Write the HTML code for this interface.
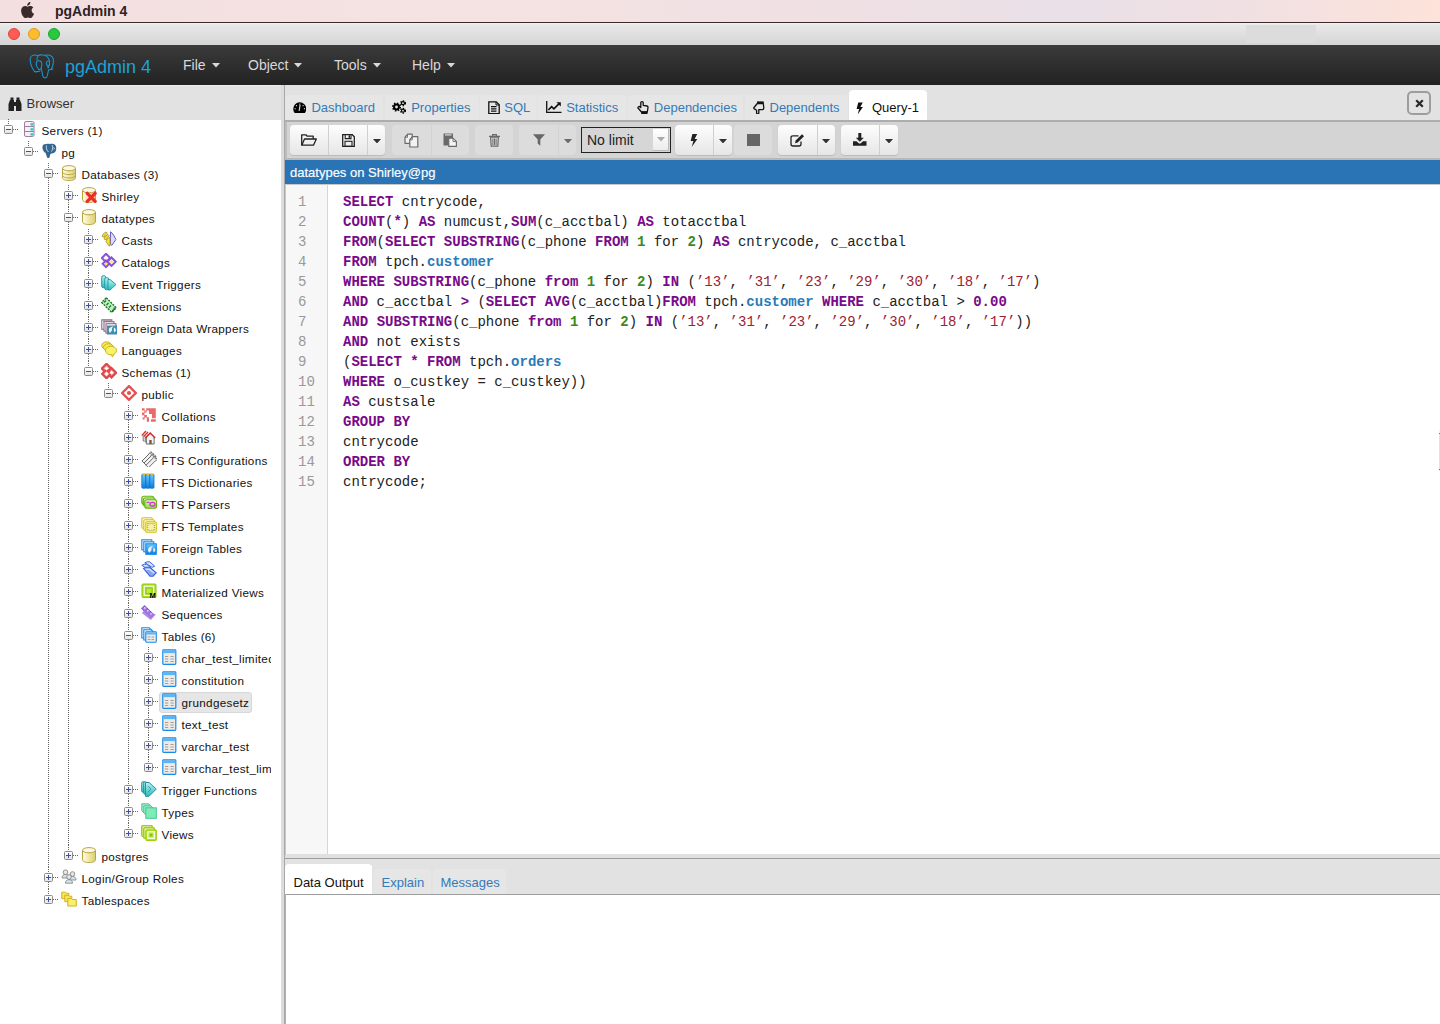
<!DOCTYPE html>
<html><head><meta charset="utf-8"><style>
*{margin:0;padding:0;box-sizing:border-box}
html,body{width:1440px;height:1024px;overflow:hidden;background:#fff;font-family:"Liberation Sans",sans-serif;position:relative}
.abs{position:absolute}
#menubar{position:absolute;left:0;top:0;width:1440px;height:23px;background:linear-gradient(90deg,#f3dfe0 0%,#f5e2e2 35%,#efe0e4 60%,#e9e0e8 74%,#f2e0e2 88%,#fde3d9 100%);border-bottom:1px solid #3a2a2c}
#menubar .apple{position:absolute;left:20px;top:2px}
#menubar .app{position:absolute;left:55px;top:2px;font-weight:bold;font-size:14px;color:#2e2222;line-height:18px}
#titlebar{position:absolute;left:0;top:23px;width:1440px;height:22px;background:linear-gradient(#f4f4f4 0,#e8e8e8 2px,#d5d5d5 100%)}
.tl{position:absolute;top:5px;width:12px;height:12px;border-radius:50%}
#navbar{position:absolute;left:0;top:45px;width:1440px;height:40px;background:linear-gradient(#3b3b3b,#222)}
#navbar .brand{position:absolute;left:65px;top:11px;font-size:18px;color:#1da1d8;line-height:22px}
#navbar .mi{position:absolute;top:11px;font-size:14px;color:#d9d9d9;line-height:18px;display:flex;align-items:center}
#navbar .mi svg{margin-left:6px;margin-top:1px}
#left{position:absolute;left:0;top:85px;width:281px;height:939px;background:#fff;overflow:hidden}
#left .hdr{position:absolute;left:0;top:0;width:281px;height:35px;background:#e2e2e2;border-top:1px solid #ececec}
#left .hdr .t{position:absolute;left:26.5px;top:10px;font-size:13px;color:#333;line-height:16px}
#left .hdr .bi{position:absolute;left:8px;top:11px}
#tree{position:absolute;left:0;top:0;width:271px;height:1024px;overflow:hidden}
.vl{position:absolute;width:1px;background-image:linear-gradient(#666 50%,transparent 50%);background-size:1px 2px}
.hl{position:absolute;width:6px;height:1px;background-image:linear-gradient(90deg,#666 50%,transparent 50%);background-size:2px 1px}
.bx{position:absolute;width:9px;height:9px;border:1px solid #8a8a8a;border-radius:1.5px;background:linear-gradient(#fff,#e4e4e4)}
.bx .mh{position:absolute;left:1px;top:3px;width:5px;height:1px;background:#3b4fa8}
.bx .mv{position:absolute;left:3px;top:1px;width:1px;height:5px;background:#3b4fa8}
.ic{position:absolute;width:16px;height:16px}
.ic svg{display:block}
.tt{position:absolute;font-size:11.7px;letter-spacing:0.3px;line-height:18px;color:#111;white-space:nowrap;padding:0 0}
.selbg{position:absolute;background:#e6e6e6;border:1px solid #d8d8d8;border-radius:3px}
#splitter{position:absolute;left:281px;top:85px;width:4px;height:939px;background:#dcdcdc;border-right:1px solid #a8a8a8}
#right{position:absolute;left:285px;top:85px;width:1155px;height:939px;background:#fff}
#tabstrip{position:absolute;left:0;top:0;width:1155px;height:37px;background:#e2e2e2;border-bottom:2px solid #adadad}
.tab{position:absolute;top:10px;height:25px;background:#e6e6e6;border-radius:4px 4px 0 0}
.tab.act{top:5px;height:30px;background:#fff}
.ti{position:absolute;display:block}.ti svg{display:block}
.tx{position:absolute;top:10px;font-size:13px;line-height:26px;color:#337ab7;white-space:nowrap}.tx.act{color:#111}
#closebtn{position:absolute;left:1122px;top:6px;width:24px;height:24px;border:2px solid #9d9d9d;border-radius:5px;background:#e2e2e2;display:flex;align-items:center;justify-content:center}
#toolbar{position:absolute;left:0;top:37px;width:1155px;height:38px;background:#d4d4d4;border-bottom:2px solid #b8b8b8;border-left:2px solid #bcbcbc}
.bg{position:absolute;top:3px;height:30px;display:flex;border-radius:4px;overflow:hidden}
.bg.en{box-shadow:0 1px 1px rgba(0,0,0,0.12)}
.bt{height:30px;display:flex;align-items:center;justify-content:center;border-left:1px solid #cfcfcf}
.bt:first-child{border-left:none}
.en .bt{background:linear-gradient(#fdfdfd,#e6e6e6)}
.dis .bt{background:#dcdcdc;border-left-color:#d2d2d2}
#sel{position:absolute;left:294px;top:5px;width:90px;height:26px;border:1px solid #222;background:#d6d6d6;font-size:14px;color:#222;line-height:24px;padding-left:5px}
#sel .arr{position:absolute;right:1px;top:1px;width:16px;height:22px;background:linear-gradient(#fff,#ececec);border-right:1px solid #bbb;border-bottom:1px solid #bbb;display:flex;align-items:center;justify-content:center}
#bluebar{position:absolute;left:0;top:75px;width:1155px;height:25px;background:#2a74b6;border-bottom:1px solid #c8c8c8}
#bluebar .t{position:absolute;left:5px;top:5px;font-size:13px;color:#fff;line-height:16px;-webkit-text-stroke:0.15px #fff}
#editor{position:absolute;left:0;top:100px;width:1155px;height:669px;background:#fff}
#gutter{position:absolute;left:0;top:0;width:43px;height:669px;background:#f7f7f7;border-right:1px solid #d6d6d6}
.ln{position:absolute;left:298px;font-family:"Liberation Mono",monospace;font-size:14px;color:#999;line-height:20px}
.cl{position:absolute;left:343px;font-family:"Liberation Mono",monospace;font-size:14px;color:#222;line-height:20px;white-space:pre}
.k{color:#780a8a;font-weight:bold}
.n{color:#3d8a1c;font-weight:bold}
.s{color:#9c2234}
.b{color:#2a7ab8;font-weight:bold}
#hsplit{position:absolute;left:0;top:769px;width:1155px;height:4.5px;background:#e0e0e0;border-bottom:1px solid #9d9d9d}
#otabs{position:absolute;left:0;top:773.5px;width:1155px;height:36px;background:#e2e2e2;border-bottom:1px solid #9d9d9d}
.otab{position:absolute;top:10.5px;height:25px;border-radius:4px 4px 0 0;font-size:13px;color:#337ab7;line-height:27px;background:#e6e6e6}
.otab.act{top:5.5px;height:30px;background:#fff;color:#111;line-height:37px}
</style></head><body>
<div id="menubar"><div class="apple"><svg width="14" height="16" viewBox="0 0 14 16"><path d="M11.6 8.5c0-2 1.6-2.9 1.7-3-0.9-1.3-2.3-1.5-2.8-1.5-1.2-0.1-2.3 0.7-2.9 0.7-0.6 0-1.5-0.7-2.5-0.7C3.8 4 2.5 4.8 1.8 6c-1.4 2.5-0.4 6.1 1 8.1 0.7 1 1.4 2 2.5 2 1 0 1.4-0.6 2.6-0.6 1.2 0 1.5 0.6 2.6 0.6 1.1 0 1.8-1 2.4-2 0.8-1.1 1.1-2.2 1.1-2.3 0 0-2.4-0.9-2.4-3.3zM9.6 2.6c0.5-0.7 0.9-1.6 0.8-2.6-0.8 0-1.8 0.5-2.4 1.2-0.5 0.6-1 1.5-0.8 2.5 0.9 0.1 1.8-0.4 2.4-1.1z" fill="#3b2a2a"/></svg></div><div class="app">pgAdmin 4</div></div>
<div id="titlebar">
 <div class="tl" style="left:8px;background:#fd5c55;border:1px solid #e2443d"></div>
 <div class="tl" style="left:28px;background:#fdbb2d;border:1px solid #dd9c1c"></div>
 <div class="tl" style="left:48px;background:#28c83f;border:1px solid #1aa82a"></div>
 <div class="abs" style="left:1246px;top:2px;width:70px;height:18px;background:#dcdcdc"></div>
</div>
<div id="navbar">
 <div class="abs" style="left:24px;top:3px"><svg width="40" height="34" viewBox="0 0 40 34"><g fill="none" stroke="#1898d2" stroke-width="1.05" stroke-linecap="round" stroke-linejoin="round"><path d="M13.9 7.5C11 6.5 7 6.8 6.3 10 5.8 13 6.8 19 10.5 23.5 12 24.5 14 23.5 16 23"/><path d="M13 12C12.5 8 15 6.5 18 7 21 6.5 24.5 8.5 25.5 13 26 16 25 18.5 24 20"/><path d="M21.5 7.3C24 6.5 28 7 29.3 11 29.5 15 28.5 19 27.5 20.5"/><path d="M14.5 21C12.5 19 12 16 12.5 14 13 12.5 15.5 12.5 17 13.5 18 15 18 18 17 20.5 16.5 21.5 15 22 14.5 21"/><path d="M24.5 19.5C22.5 17 22 14.5 23 13.5 24 12.5 25.5 13 25.5 14"/><path d="M17.5 21C18 24 18.5 27 19 28.5 19.5 30 21 30.2 22.5 29.5 23.5 28 24 25 24.5 22 25.5 21.5 27 21.5 29 21"/></g></svg></div>
 <div class="brand">pgAdmin 4</div>
 <div class="mi" style="left:183px">File<svg width="8" height="4.5" viewBox="0 0 8 4.5"><path d="M0 0h8L4 4.5z" fill="currentColor"/></svg></div>
 <div class="mi" style="left:248px">Object<svg width="8" height="4.5" viewBox="0 0 8 4.5"><path d="M0 0h8L4 4.5z" fill="currentColor"/></svg></div>
 <div class="mi" style="left:334px">Tools<svg width="8" height="4.5" viewBox="0 0 8 4.5"><path d="M0 0h8L4 4.5z" fill="currentColor"/></svg></div>
 <div class="mi" style="left:412px">Help<svg width="8" height="4.5" viewBox="0 0 8 4.5"><path d="M0 0h8L4 4.5z" fill="currentColor"/></svg></div>
</div>
<div id="left">
 <div class="hdr"><div class="bi"><svg width="14" height="14" viewBox="0 0 14 14"><rect x="2.5" y="0.5" width="3" height="3" fill="#222"/><rect x="8.5" y="0.5" width="3" height="3" fill="#222"/><path d="M2 3h4v11H0.5V7z" fill="#222"/><path d="M8 3h4l1.5 4v7H8z" fill="#222"/><rect x="5" y="5" width="4" height="4" fill="#222"/></svg></div><div class="t">Browser</div></div>
</div>
<div id="tree" style="top:0">
<div class="vl" style="left:8.0px;top:119.0px;height:6.0px"></div>
<div class="vl" style="left:28.0px;top:141.0px;height:6.0px"></div>
<div class="vl" style="left:48.0px;top:163.0px;height:6.0px"></div>
<div class="vl" style="left:48.0px;top:178.0px;height:689.0px"></div>
<div class="vl" style="left:68.0px;top:185.0px;height:6.0px"></div>
<div class="vl" style="left:68.0px;top:200.0px;height:7.0px"></div>
<div class="vl" style="left:68.0px;top:207.0px;height:6.0px"></div>
<div class="vl" style="left:68.0px;top:222.0px;height:623.0px"></div>
<div class="vl" style="left:88.0px;top:229.0px;height:6.0px"></div>
<div class="vl" style="left:88.0px;top:244.0px;height:7.0px"></div>
<div class="vl" style="left:88.0px;top:251.0px;height:6.0px"></div>
<div class="vl" style="left:88.0px;top:266.0px;height:7.0px"></div>
<div class="vl" style="left:88.0px;top:273.0px;height:6.0px"></div>
<div class="vl" style="left:88.0px;top:288.0px;height:7.0px"></div>
<div class="vl" style="left:88.0px;top:295.0px;height:6.0px"></div>
<div class="vl" style="left:88.0px;top:310.0px;height:7.0px"></div>
<div class="vl" style="left:88.0px;top:317.0px;height:6.0px"></div>
<div class="vl" style="left:88.0px;top:332.0px;height:7.0px"></div>
<div class="vl" style="left:88.0px;top:339.0px;height:6.0px"></div>
<div class="vl" style="left:88.0px;top:354.0px;height:7.0px"></div>
<div class="vl" style="left:88.0px;top:361.0px;height:6.0px"></div>
<div class="vl" style="left:108.0px;top:383.0px;height:6.0px"></div>
<div class="vl" style="left:128.0px;top:405.0px;height:6.0px"></div>
<div class="vl" style="left:128.0px;top:420.0px;height:7.0px"></div>
<div class="vl" style="left:128.0px;top:427.0px;height:6.0px"></div>
<div class="vl" style="left:128.0px;top:442.0px;height:7.0px"></div>
<div class="vl" style="left:128.0px;top:449.0px;height:6.0px"></div>
<div class="vl" style="left:128.0px;top:464.0px;height:7.0px"></div>
<div class="vl" style="left:128.0px;top:471.0px;height:6.0px"></div>
<div class="vl" style="left:128.0px;top:486.0px;height:7.0px"></div>
<div class="vl" style="left:128.0px;top:493.0px;height:6.0px"></div>
<div class="vl" style="left:128.0px;top:508.0px;height:7.0px"></div>
<div class="vl" style="left:128.0px;top:515.0px;height:6.0px"></div>
<div class="vl" style="left:128.0px;top:530.0px;height:7.0px"></div>
<div class="vl" style="left:128.0px;top:537.0px;height:6.0px"></div>
<div class="vl" style="left:128.0px;top:552.0px;height:7.0px"></div>
<div class="vl" style="left:128.0px;top:559.0px;height:6.0px"></div>
<div class="vl" style="left:128.0px;top:574.0px;height:7.0px"></div>
<div class="vl" style="left:128.0px;top:581.0px;height:6.0px"></div>
<div class="vl" style="left:128.0px;top:596.0px;height:7.0px"></div>
<div class="vl" style="left:128.0px;top:603.0px;height:6.0px"></div>
<div class="vl" style="left:128.0px;top:618.0px;height:7.0px"></div>
<div class="vl" style="left:128.0px;top:625.0px;height:6.0px"></div>
<div class="vl" style="left:128.0px;top:640.0px;height:139.0px"></div>
<div class="vl" style="left:148.0px;top:647.0px;height:6.0px"></div>
<div class="vl" style="left:148.0px;top:662.0px;height:7.0px"></div>
<div class="vl" style="left:148.0px;top:669.0px;height:6.0px"></div>
<div class="vl" style="left:148.0px;top:684.0px;height:7.0px"></div>
<div class="vl" style="left:148.0px;top:691.0px;height:6.0px"></div>
<div class="vl" style="left:148.0px;top:706.0px;height:7.0px"></div>
<div class="vl" style="left:148.0px;top:713.0px;height:6.0px"></div>
<div class="vl" style="left:148.0px;top:728.0px;height:7.0px"></div>
<div class="vl" style="left:148.0px;top:735.0px;height:6.0px"></div>
<div class="vl" style="left:148.0px;top:750.0px;height:7.0px"></div>
<div class="vl" style="left:148.0px;top:757.0px;height:6.0px"></div>
<div class="vl" style="left:128.0px;top:779.0px;height:6.0px"></div>
<div class="vl" style="left:128.0px;top:794.0px;height:7.0px"></div>
<div class="vl" style="left:128.0px;top:801.0px;height:6.0px"></div>
<div class="vl" style="left:128.0px;top:816.0px;height:7.0px"></div>
<div class="vl" style="left:128.0px;top:823.0px;height:6.0px"></div>
<div class="vl" style="left:68.0px;top:845.0px;height:6.0px"></div>
<div class="vl" style="left:48.0px;top:867.0px;height:6.0px"></div>
<div class="vl" style="left:48.0px;top:882.0px;height:7.0px"></div>
<div class="vl" style="left:48.0px;top:889.0px;height:6.0px"></div>
<div class="hl" style="left:13.0px;top:129.0px"></div>
<div class="bx" style="left:4.0px;top:125.0px"><i class="mh"></i></div>
<div class="ic" style="left:20.5px;top:121.0px"><svg width="16" height="16" viewBox="0 0 16 16"><rect x="3.5" y="0.5" width="9.5" height="15" rx="1.5" fill="#f6eef4" stroke="#a07f9c"/><path d="M3.5 5.5h9.5M3.5 10.5h9.5" stroke="#a07f9c"/><rect x="9.5" y="2.2" width="2.6" height="2.3" fill="#28c8c4"/><rect x="9.5" y="7.2" width="2.6" height="2.3" fill="#28c8c4"/><rect x="9.5" y="12.2" width="2.6" height="2.3" fill="#28c8c4"/></svg></div>
<div class="tt" style="left:41.5px;top:121.5px">Servers (1)</div>
<div class="hl" style="left:33.0px;top:151.0px"></div>
<div class="bx" style="left:24.0px;top:147.0px"><i class="mh"></i></div>
<div class="ic" style="left:40.5px;top:143.0px"><svg width="16" height="16" viewBox="0 0 16 16"><path d="M3.5 1.2C1.5 1.5 1 4 1.8 6.5 2.5 8.5 3.5 9.5 4.5 9.8 5 11 5.5 13 6.3 14.8 7.5 15.5 8.5 15 8.8 13.5 9 12 9.2 11 10 10.5 11.5 10.5 13.5 10 14.5 8.5 15.8 6.5 15.5 3 14 1.8 12.5 0.5 10 0.5 8.5 1 7 0.3 5 0.8 3.5 1.2Z" fill="#336791"/><path d="M5.5 2.5C5 5 5.5 7 7.5 9M11 2c1 2 1 4-0.5 6.5M12.5 4.5c1 0.5 1 1.5 0.3 2" stroke="#e8f0f8" stroke-width="0.8" fill="none"/></svg></div>
<div class="tt" style="left:61.5px;top:143.5px">pg</div>
<div class="hl" style="left:53.0px;top:173.0px"></div>
<div class="bx" style="left:44.0px;top:169.0px"><i class="mh"></i></div>
<div class="ic" style="left:60.5px;top:165.0px"><svg width="16" height="16" viewBox="0 0 16 16"><defs>
<linearGradient id="gy" x1="0" x2="1"><stop offset="0" stop-color="#fffbe8"/><stop offset="0.35" stop-color="#f4eeb8"/><stop offset="1" stop-color="#d9cf70"/></linearGradient>
<linearGradient id="gb" x1="0" x2="0" y1="0" y2="1"><stop offset="0" stop-color="#6cc8ff"/><stop offset="1" stop-color="#0a7ee0"/></linearGradient>
<linearGradient id="gt" x1="0" x2="0" y1="0" y2="1"><stop offset="0" stop-color="#b8f4f4"/><stop offset="1" stop-color="#2ab8b8"/></linearGradient>
<linearGradient id="gg" x1="0" x2="0" y1="0" y2="1"><stop offset="0" stop-color="#dcffc0"/><stop offset="1" stop-color="#8ad84a"/></linearGradient>
</defs><path d="M1.5 3.2v9.6c0 1.6 2.9 2.8 6.5 2.8s6.5-1.2 6.5-2.8V3.2" fill="url(#gy)" stroke="#b7a344"/><ellipse cx="8" cy="3.2" rx="6.5" ry="2.6" fill="#fcf9e2" stroke="#b7a344"/><path d="M1.5 6.8c0 1.6 2.9 2.8 6.5 2.8s6.5-1.2 6.5-2.8M1.5 10.2c0 1.6 2.9 2.8 6.5 2.8s6.5-1.2 6.5-2.8" fill="none" stroke="#b7a344"/></svg></div>
<div class="tt" style="left:81.5px;top:165.5px">Databases (3)</div>
<div class="hl" style="left:73.0px;top:195.0px"></div>
<div class="bx" style="left:64.0px;top:191.0px"><i class="mh"></i><i class="mv"></i></div>
<div class="ic" style="left:80.5px;top:187.0px"><svg width="16" height="16" viewBox="0 0 16 16"><defs>
<linearGradient id="gy" x1="0" x2="1"><stop offset="0" stop-color="#fffbe8"/><stop offset="0.35" stop-color="#f4eeb8"/><stop offset="1" stop-color="#d9cf70"/></linearGradient>
<linearGradient id="gb" x1="0" x2="0" y1="0" y2="1"><stop offset="0" stop-color="#6cc8ff"/><stop offset="1" stop-color="#0a7ee0"/></linearGradient>
<linearGradient id="gt" x1="0" x2="0" y1="0" y2="1"><stop offset="0" stop-color="#b8f4f4"/><stop offset="1" stop-color="#2ab8b8"/></linearGradient>
<linearGradient id="gg" x1="0" x2="0" y1="0" y2="1"><stop offset="0" stop-color="#dcffc0"/><stop offset="1" stop-color="#8ad84a"/></linearGradient>
</defs><path d="M1.5 3.2v9.6c0 1.6 2.9 2.8 6.5 2.8s6.5-1.2 6.5-2.8V3.2" fill="url(#gy)" stroke="#b7a344"/><ellipse cx="8" cy="3.2" rx="6.5" ry="2.6" fill="#fcf9e2" stroke="#b7a344"/><path d="M6.2 6.3l8 8M14.2 6.3l-8 8" stroke="#ee2a2a" stroke-width="3.2" stroke-linecap="round"/></svg></div>
<div class="tt" style="left:101.5px;top:187.5px">Shirley</div>
<div class="hl" style="left:73.0px;top:217.0px"></div>
<div class="bx" style="left:64.0px;top:213.0px"><i class="mh"></i></div>
<div class="ic" style="left:80.5px;top:209.0px"><svg width="16" height="16" viewBox="0 0 16 16"><defs>
<linearGradient id="gy" x1="0" x2="1"><stop offset="0" stop-color="#fffbe8"/><stop offset="0.35" stop-color="#f4eeb8"/><stop offset="1" stop-color="#d9cf70"/></linearGradient>
<linearGradient id="gb" x1="0" x2="0" y1="0" y2="1"><stop offset="0" stop-color="#6cc8ff"/><stop offset="1" stop-color="#0a7ee0"/></linearGradient>
<linearGradient id="gt" x1="0" x2="0" y1="0" y2="1"><stop offset="0" stop-color="#b8f4f4"/><stop offset="1" stop-color="#2ab8b8"/></linearGradient>
<linearGradient id="gg" x1="0" x2="0" y1="0" y2="1"><stop offset="0" stop-color="#dcffc0"/><stop offset="1" stop-color="#8ad84a"/></linearGradient>
</defs><path d="M1.5 3.2v9.6c0 1.6 2.9 2.8 6.5 2.8s6.5-1.2 6.5-2.8V3.2" fill="url(#gy)" stroke="#b7a344"/><ellipse cx="8" cy="3.2" rx="6.5" ry="2.6" fill="#fcf9e2" stroke="#b7a344"/></svg></div>
<div class="tt" style="left:101.5px;top:209.5px">datatypes</div>
<div class="hl" style="left:93.0px;top:239.0px"></div>
<div class="bx" style="left:84.0px;top:235.0px"><i class="mh"></i><i class="mv"></i></div>
<div class="ic" style="left:100.5px;top:231.0px"><svg width="16" height="16" viewBox="0 0 16 16"><path d="M9.5 0.8l1.5 1.2 1.5 2 1.2 2 1.2 2.5-4 5.8-1.4-0.8z" fill="#dcdcff" stroke="#6a5ad8"/><path d="M1 5.5Q2 2 5 1l1.3 1.3Q4 3.2 3.2 6.2zM3 8Q4 4.5 7 3.5l1.3 1.3Q6 5.7 5.2 8.7zM5 10.5Q6 7 9 6v9H8z" fill="#f0e820" stroke="#b09a30" stroke-width="0.9"/></svg></div>
<div class="tt" style="left:121.5px;top:231.5px">Casts</div>
<div class="hl" style="left:93.0px;top:261.0px"></div>
<div class="bx" style="left:84.0px;top:257.0px"><i class="mh"></i><i class="mv"></i></div>
<div class="ic" style="left:100.5px;top:253.0px"><svg width="16" height="16" viewBox="0 0 16 16"><path d="M5 0.8l4.2 4.2-4.2 4.2L0.8 5z" fill="none" stroke="#8a4ed8" stroke-width="2"/><path d="M10.5 4.5l4.2 4.2-4.2 4.2-4.2-4.2z" fill="none" stroke="#8a4ed8" stroke-width="2"/><path d="M5 7.5l3.3 3.3-3.3 3.3-3.3-3.3z" fill="none" stroke="#8a4ed8" stroke-width="2"/><rect x="9.3" y="7.5" width="2.4" height="2.4" fill="#f4f030" transform="rotate(45 10.5 8.7)"/><rect x="3.8" y="9.6" width="2.4" height="2.4" fill="#f4f030" transform="rotate(45 5 10.8)"/></svg></div>
<div class="tt" style="left:121.5px;top:253.5px">Catalogs</div>
<div class="hl" style="left:93.0px;top:283.0px"></div>
<div class="bx" style="left:84.0px;top:279.0px"><i class="mh"></i><i class="mv"></i></div>
<div class="ic" style="left:100.5px;top:275.0px"><svg width="16" height="16" viewBox="0 0 16 16"><defs>
<linearGradient id="gy" x1="0" x2="1"><stop offset="0" stop-color="#fffbe8"/><stop offset="0.35" stop-color="#f4eeb8"/><stop offset="1" stop-color="#d9cf70"/></linearGradient>
<linearGradient id="gb" x1="0" x2="0" y1="0" y2="1"><stop offset="0" stop-color="#6cc8ff"/><stop offset="1" stop-color="#0a7ee0"/></linearGradient>
<linearGradient id="gt" x1="0" x2="0" y1="0" y2="1"><stop offset="0" stop-color="#b8f4f4"/><stop offset="1" stop-color="#2ab8b8"/></linearGradient>
<linearGradient id="gg" x1="0" x2="0" y1="0" y2="1"><stop offset="0" stop-color="#dcffc0"/><stop offset="1" stop-color="#8ad84a"/></linearGradient>
</defs><rect x="0.7" y="0.7" width="4" height="12" rx="1.5" fill="url(#gt)" stroke="#2a9aa8"/><rect x="3.7" y="2.7" width="4" height="12" rx="1.5" fill="url(#gt)" stroke="#2a9aa8"/><path d="M7 4.5h2l6 5-6 5.5H7z" fill="url(#gt)" stroke="#2a9aa8"/></svg></div>
<div class="tt" style="left:121.5px;top:275.5px">Event Triggers</div>
<div class="hl" style="left:93.0px;top:305.0px"></div>
<div class="bx" style="left:84.0px;top:301.0px"><i class="mh"></i><i class="mv"></i></div>
<div class="ic" style="left:100.5px;top:297.0px"><svg width="16" height="16" viewBox="0 0 16 16"><path d="M5.3 0.8l10 10-4.6 4.6-10-10z" fill="#bfeccc" stroke="#1a7a1a" stroke-width="1.4" stroke-dasharray="2 1"/><path d="M3 5.5l2-2M5.5 8l2-2M8 10.5l2-2" stroke="#1a7a1a" stroke-width="1.2"/><path d="M13 10.5a2 2 0 0 1-2 3" stroke="#1a7a1a" stroke-width="1.4" fill="none"/></svg></div>
<div class="tt" style="left:121.5px;top:297.5px">Extensions</div>
<div class="hl" style="left:93.0px;top:327.0px"></div>
<div class="bx" style="left:84.0px;top:323.0px"><i class="mh"></i><i class="mv"></i></div>
<div class="ic" style="left:100.5px;top:319.0px"><svg width="16" height="16" viewBox="0 0 16 16"><rect x="0.8" y="0.8" width="10" height="9.5" fill="#fff" stroke="#8a6a88" stroke-width="1.1"/><rect x="3" y="2.7" width="10" height="9.5" fill="#fff" stroke="#8a6a88" stroke-width="1.1"/><rect x="5" y="4.7" width="10" height="9.5" fill="#fff" stroke="#8a6a88" stroke-width="1.1"/><rect x="2" y="1.5" width="8" height="1" fill="#8a6a88"/><rect x="6" y="6.5" width="10" height="9" fill="#3e8eae"/><path d="M8 9.5c1.5-1.5 3-2 4.5-2-1 1-2 2-1.5 3s-1 2-2 3.5c-1-1-1.5-3-1-4.5zM13 8.5c1 0 2 1.5 2 3-0.5 1-1.5 1.5-2 2 0-1.5-0.5-3 0-5z" fill="#f4eeee"/></svg></div>
<div class="tt" style="left:121.5px;top:319.5px">Foreign Data Wrappers</div>
<div class="hl" style="left:93.0px;top:349.0px"></div>
<div class="bx" style="left:84.0px;top:345.0px"><i class="mh"></i><i class="mv"></i></div>
<div class="ic" style="left:100.5px;top:341.0px"><svg width="16" height="16" viewBox="0 0 16 16"><ellipse cx="5.5" cy="4.5" rx="4.8" ry="3.7" fill="#f4ea5a" stroke="#d4b010"/><ellipse cx="7.5" cy="6.5" rx="5" ry="3.8" fill="#f4ea5a" stroke="#d4b010"/><ellipse cx="10" cy="9.5" rx="5.5" ry="4.3" fill="#f8f46a" stroke="#d4b010"/><path d="M10.5 13.5l1 2.5 1.5-3" fill="#f8f46a" stroke="#d4b010"/></svg></div>
<div class="tt" style="left:121.5px;top:341.5px">Languages</div>
<div class="hl" style="left:93.0px;top:371.0px"></div>
<div class="bx" style="left:84.0px;top:367.0px"><i class="mh"></i></div>
<div class="ic" style="left:100.5px;top:363.0px"><svg width="16" height="16" viewBox="0 0 16 16"><path d="M5.5 0.8l4.7 4.7-4.7 4.7L0.8 5.5z" fill="#f4a0a0" stroke="#e04848" stroke-width="2.2"/><path d="M10.5 5l4.7 4.7-4.7 4.7-4.7-4.7z" fill="#f4a0a0" stroke="#e04848" stroke-width="2.2"/><path d="M5.5 6.5l4.4 4.4-4.4 4.4-4.4-4.4z" fill="#f4a0a0" stroke="#e04848" stroke-width="2.2"/><path d="M5.5 3.5l2 2-2 2-2-2zM10.5 7.7l2 2-2 2-2-2zM5.5 8.9l2 2-2 2-2-2z" fill="#fff"/></svg></div>
<div class="tt" style="left:121.5px;top:363.5px">Schemas (1)</div>
<div class="hl" style="left:113.0px;top:393.0px"></div>
<div class="bx" style="left:104.0px;top:389.0px"><i class="mh"></i></div>
<div class="ic" style="left:120.5px;top:385.0px"><svg width="16" height="16" viewBox="0 0 16 16"><path d="M8 1.2l6.8 6.8-6.8 6.8L1.2 8z" fill="#fff" stroke="#e65050" stroke-width="2.4"/><circle cx="8" cy="8" r="2.1" fill="#e65050"/></svg></div>
<div class="tt" style="left:141.5px;top:385.5px">public</div>
<div class="hl" style="left:133.0px;top:415.0px"></div>
<div class="bx" style="left:124.0px;top:411.0px"><i class="mh"></i><i class="mv"></i></div>
<div class="ic" style="left:140.5px;top:407.0px"><svg width="16" height="16" viewBox="0 0 16 16"><path d="M1 1.2h2.6v2.2H1zM5.2 1.2h9.6v10H11V4.2H8V3.4H5.2zM1 5.5h2.5v2.7H1zM3.3 3.4h2.4v2.4H3.3zM3.2 8h2.7v2.4H3.2zM5.8 10.3h2.2v4.5H5.8zM1.6 10.4h2v2.2h-2zM8 4.2h3V7H8zM10 12.2h4.8v2.6H10z" fill="#ea6a6a"/><rect x="4.5" y="4.8" width="1" height="1" fill="#fff"/></svg></div>
<div class="tt" style="left:161.5px;top:407.5px">Collations</div>
<div class="hl" style="left:133.0px;top:437.0px"></div>
<div class="bx" style="left:124.0px;top:433.0px"><i class="mh"></i><i class="mv"></i></div>
<div class="ic" style="left:140.5px;top:429.0px"><svg width="16" height="16" viewBox="0 0 16 16"><path d="M0.8 6.5L5 2" fill="none" stroke="#d83030" stroke-width="1.3"/><path d="M2.7 7.5L7 3" fill="none" stroke="#d83030" stroke-width="1.3"/><path d="M2.2 6.5v5.5h1.2M4.2 7.5v5.5h1.2" fill="none" stroke="#777" stroke-width="1"/><path d="M5.3 8v7h7.8V8L9.2 4.3z" fill="#eef2fa" stroke="#6a6a6a" stroke-width="1"/><path d="M4.3 9L9.2 4l5 5" fill="none" stroke="#d82828" stroke-width="1.5"/><rect x="8.3" y="11" width="2.4" height="4" fill="#8a5a18"/></svg></div>
<div class="tt" style="left:161.5px;top:429.5px">Domains</div>
<div class="hl" style="left:133.0px;top:459.0px"></div>
<div class="bx" style="left:124.0px;top:455.0px"><i class="mh"></i><i class="mv"></i></div>
<div class="ic" style="left:140.5px;top:451.0px"><svg width="16" height="16" viewBox="0 0 16 16"><g fill="#f0f0f0" stroke="#6a6a6a" stroke-width="1"><path d="M1 10l7-7c0.3-1.5 1.5-2.2 3-1.8l-1.3 1.6 1 1 1.6-1.3c0.4 1.5-0.3 2.7-1.8 3l-7 7z"/><path d="M3 12l7-7c0.3-1.5 1.5-2.2 3-1.8l-1.3 1.6 1 1 1.6-1.3c0.4 1.5-0.3 2.7-1.8 3l-7 7z"/><path d="M5 14.2l7-7c0.3-1.5 1.5-2.2 3-1.8l-1.3 1.6 1 1 1.6-1.3c0.4 1.5-0.3 2.7-1.8 3l-7 7z"/></g></svg></div>
<div class="tt" style="left:161.5px;top:451.5px">FTS Configurations</div>
<div class="hl" style="left:133.0px;top:481.0px"></div>
<div class="bx" style="left:124.0px;top:477.0px"><i class="mh"></i><i class="mv"></i></div>
<div class="ic" style="left:140.5px;top:473.0px"><svg width="16" height="16" viewBox="0 0 16 16"><defs>
<linearGradient id="gy" x1="0" x2="1"><stop offset="0" stop-color="#fffbe8"/><stop offset="0.35" stop-color="#f4eeb8"/><stop offset="1" stop-color="#d9cf70"/></linearGradient>
<linearGradient id="gb" x1="0" x2="0" y1="0" y2="1"><stop offset="0" stop-color="#6cc8ff"/><stop offset="1" stop-color="#0a7ee0"/></linearGradient>
<linearGradient id="gt" x1="0" x2="0" y1="0" y2="1"><stop offset="0" stop-color="#b8f4f4"/><stop offset="1" stop-color="#2ab8b8"/></linearGradient>
<linearGradient id="gg" x1="0" x2="0" y1="0" y2="1"><stop offset="0" stop-color="#dcffc0"/><stop offset="1" stop-color="#8ad84a"/></linearGradient>
</defs><rect x="0.8" y="1.2" width="4.2" height="14" rx="0.8" fill="url(#gb)" stroke="#0a72c8" stroke-width="0.8"/><rect x="4.8" y="1.2" width="4.2" height="14" rx="0.8" fill="url(#gb)" stroke="#0a72c8" stroke-width="0.8"/><rect x="8.8" y="1.2" width="4.2" height="14" rx="0.8" fill="url(#gb)" stroke="#0a72c8" stroke-width="0.8"/><rect x="1.6" y="0.8" width="2.6" height="1.2" fill="#f0c020"/><rect x="5.6" y="0.8" width="2.6" height="1.2" fill="#f0c020"/><rect x="9.6" y="0.8" width="2.6" height="1.2" fill="#f0c020"/></svg></div>
<div class="tt" style="left:161.5px;top:473.5px">FTS Dictionaries</div>
<div class="hl" style="left:133.0px;top:503.0px"></div>
<div class="bx" style="left:124.0px;top:499.0px"><i class="mh"></i><i class="mv"></i></div>
<div class="ic" style="left:140.5px;top:495.0px"><svg width="16" height="16" viewBox="0 0 16 16"><defs>
<linearGradient id="gy" x1="0" x2="1"><stop offset="0" stop-color="#fffbe8"/><stop offset="0.35" stop-color="#f4eeb8"/><stop offset="1" stop-color="#d9cf70"/></linearGradient>
<linearGradient id="gb" x1="0" x2="0" y1="0" y2="1"><stop offset="0" stop-color="#6cc8ff"/><stop offset="1" stop-color="#0a7ee0"/></linearGradient>
<linearGradient id="gt" x1="0" x2="0" y1="0" y2="1"><stop offset="0" stop-color="#b8f4f4"/><stop offset="1" stop-color="#2ab8b8"/></linearGradient>
<linearGradient id="gg" x1="0" x2="0" y1="0" y2="1"><stop offset="0" stop-color="#dcffc0"/><stop offset="1" stop-color="#8ad84a"/></linearGradient>
</defs><rect x="0.8" y="1.2" width="12" height="8" rx="2" fill="url(#gg)" stroke="#6ab010" stroke-width="1.1"/><rect x="2.3" y="3" width="12" height="8" rx="2" fill="url(#gg)" stroke="#6ab010" stroke-width="1.1"/><rect x="3.8" y="4.8" width="11.8" height="8.5" rx="2" fill="url(#gg)" stroke="#6ab010" stroke-width="1.1"/><path d="M5.5 7.3h3" stroke="#e020e0" stroke-width="1.1"/><ellipse cx="11.5" cy="9.2" rx="2.6" ry="1.9" fill="none" stroke="#e020e0" stroke-width="1.2"/></svg></div>
<div class="tt" style="left:161.5px;top:495.5px">FTS Parsers</div>
<div class="hl" style="left:133.0px;top:525.0px"></div>
<div class="bx" style="left:124.0px;top:521.0px"><i class="mh"></i><i class="mv"></i></div>
<div class="ic" style="left:140.5px;top:517.0px"><svg width="16" height="16" viewBox="0 0 16 16"><rect x="0.8" y="0.8" width="10.5" height="10.5" rx="1" fill="#fffbd0" stroke="#d4c020" stroke-width="1.1"/><rect x="2.8" y="2.8" width="10.5" height="10.5" rx="1" fill="#fffbd0" stroke="#d4c020" stroke-width="1.1"/><rect x="4.8" y="4.8" width="10.5" height="10.5" rx="1" fill="#f8f2a0" stroke="#d4c020" stroke-width="1.1"/><rect x="6.7" y="6.7" width="6.6" height="6.6" fill="none" stroke="#555" stroke-width="0.8" stroke-dasharray="0.8 1.2"/></svg></div>
<div class="tt" style="left:161.5px;top:517.5px">FTS Templates</div>
<div class="hl" style="left:133.0px;top:547.0px"></div>
<div class="bx" style="left:124.0px;top:543.0px"><i class="mh"></i><i class="mv"></i></div>
<div class="ic" style="left:140.5px;top:539.0px"><svg width="16" height="16" viewBox="0 0 16 16"><defs>
<linearGradient id="gy" x1="0" x2="1"><stop offset="0" stop-color="#fffbe8"/><stop offset="0.35" stop-color="#f4eeb8"/><stop offset="1" stop-color="#d9cf70"/></linearGradient>
<linearGradient id="gb" x1="0" x2="0" y1="0" y2="1"><stop offset="0" stop-color="#6cc8ff"/><stop offset="1" stop-color="#0a7ee0"/></linearGradient>
<linearGradient id="gt" x1="0" x2="0" y1="0" y2="1"><stop offset="0" stop-color="#b8f4f4"/><stop offset="1" stop-color="#2ab8b8"/></linearGradient>
<linearGradient id="gg" x1="0" x2="0" y1="0" y2="1"><stop offset="0" stop-color="#dcffc0"/><stop offset="1" stop-color="#8ad84a"/></linearGradient>
</defs><rect x="0.8" y="0.8" width="10" height="10" fill="#e4f2ff" stroke="#1a8ae8" stroke-width="1.1"/><rect x="2.8" y="2.8" width="10" height="10" fill="#e4f2ff" stroke="#1a8ae8" stroke-width="1.1"/><rect x="4.8" y="4.8" width="10.5" height="10.5" fill="url(#gb)" stroke="#1a8ae8" stroke-width="1.1"/><path d="M7 10c1-2 3-3 5-3-1 1-2 2-1.5 3s-1 2.5-2 3.8C7.5 13 6.8 11.5 7 10zM12.5 8.5c1 0.5 2 2 1.8 3.5-0.6 0.5-1.2 1-1.8 1.2 0-1.5-0.5-3 0-4.7z" fill="#f4f0ee"/></svg></div>
<div class="tt" style="left:161.5px;top:539.5px">Foreign Tables</div>
<div class="hl" style="left:133.0px;top:569.0px"></div>
<div class="bx" style="left:124.0px;top:565.0px"><i class="mh"></i><i class="mv"></i></div>
<div class="ic" style="left:140.5px;top:561.0px"><svg width="16" height="16" viewBox="0 0 16 16"><defs>
<linearGradient id="gy" x1="0" x2="1"><stop offset="0" stop-color="#fffbe8"/><stop offset="0.35" stop-color="#f4eeb8"/><stop offset="1" stop-color="#d9cf70"/></linearGradient>
<linearGradient id="gb" x1="0" x2="0" y1="0" y2="1"><stop offset="0" stop-color="#6cc8ff"/><stop offset="1" stop-color="#0a7ee0"/></linearGradient>
<linearGradient id="gt" x1="0" x2="0" y1="0" y2="1"><stop offset="0" stop-color="#b8f4f4"/><stop offset="1" stop-color="#2ab8b8"/></linearGradient>
<linearGradient id="gg" x1="0" x2="0" y1="0" y2="1"><stop offset="0" stop-color="#dcffc0"/><stop offset="1" stop-color="#8ad84a"/></linearGradient>
</defs><path d="M3.8 1.8L6.2 0.8h2.5l5 4.5-2.6 1z" fill="#d8e6ff" stroke="#3a62d8" stroke-width="1"/><path d="M0.8 4.3L3.3 3.3h2.5l5 4.5-2.6 1z" fill="#d8e6ff" stroke="#3a62d8" stroke-width="1"/><path d="M2.5 7.5L5 6.3h3.8l6.5 5.5-3.2 3.4H9z" fill="#8aa8f0" stroke="#3a62d8" stroke-width="1.1"/><path d="M4.5 8.3h4.2l4.5 3.8" stroke="#e8f0ff" stroke-width="1.1" fill="none"/></svg></div>
<div class="tt" style="left:161.5px;top:561.5px">Functions</div>
<div class="hl" style="left:133.0px;top:591.0px"></div>
<div class="bx" style="left:124.0px;top:587.0px"><i class="mh"></i><i class="mv"></i></div>
<div class="ic" style="left:140.5px;top:583.0px"><svg width="16" height="16" viewBox="0 0 16 16"><rect x="1" y="1" width="14" height="13.5" rx="1" fill="#a8e020" stroke="#90c810"/><rect x="3.2" y="3.2" width="9.5" height="9.2" fill="none" stroke="#fff" stroke-width="1.1"/><rect x="5" y="5" width="6" height="5.5" fill="#b8ea40" stroke="#90c810"/><text x="8.6" y="15.3" font-size="7.5" font-family="Liberation Sans" font-weight="bold" fill="#000">M</text></svg></div>
<div class="tt" style="left:161.5px;top:583.5px">Materialized Views</div>
<div class="hl" style="left:133.0px;top:613.0px"></div>
<div class="bx" style="left:124.0px;top:609.0px"><i class="mh"></i><i class="mv"></i></div>
<div class="ic" style="left:140.5px;top:605.0px"><svg width="16" height="16" viewBox="0 0 16 16"><path d="M3.5 0.8l3 3-2.7 2.7-3-3zM6.5 3.7l3 3-2.7 2.7-3-3zM9.6 6.7l3 3-2.7 2.7-3-3z" fill="#b08ae8" stroke="#8858d8" stroke-width="1.1"/><path d="M0.8 8l3-3 11 4.5-5 5.5z" fill="#a078e0" opacity="0.85"/><path d="M3.5 2.5l0.8 0.8M6.5 5.5l0.8 0.8M9.6 8.5l0.8 0.8" stroke="#fff" stroke-width="1.2"/></svg></div>
<div class="tt" style="left:161.5px;top:605.5px">Sequences</div>
<div class="hl" style="left:133.0px;top:635.0px"></div>
<div class="bx" style="left:124.0px;top:631.0px"><i class="mh"></i></div>
<div class="ic" style="left:140.5px;top:627.0px"><svg width="16" height="16" viewBox="0 0 16 16"><defs>
<linearGradient id="gy" x1="0" x2="1"><stop offset="0" stop-color="#fffbe8"/><stop offset="0.35" stop-color="#f4eeb8"/><stop offset="1" stop-color="#d9cf70"/></linearGradient>
<linearGradient id="gb" x1="0" x2="0" y1="0" y2="1"><stop offset="0" stop-color="#6cc8ff"/><stop offset="1" stop-color="#0a7ee0"/></linearGradient>
<linearGradient id="gt" x1="0" x2="0" y1="0" y2="1"><stop offset="0" stop-color="#b8f4f4"/><stop offset="1" stop-color="#2ab8b8"/></linearGradient>
<linearGradient id="gg" x1="0" x2="0" y1="0" y2="1"><stop offset="0" stop-color="#dcffc0"/><stop offset="1" stop-color="#8ad84a"/></linearGradient>
</defs><path d="M0.8 0.8h7.5l2.7 2.7v7.5H0.8z" fill="#e8f4ff" stroke="#1a8ae8" stroke-width="1.1"/><path d="M2.8 2.8h7.5l2.7 2.7v7.5H2.8z" fill="#e8f4ff" stroke="#1a8ae8" stroke-width="1.1"/><rect x="4.8" y="4.8" width="10.5" height="10.5" rx="0.8" fill="#eeeae6" stroke="#1a8ae8" stroke-width="1.1"/><rect x="5.3" y="5.3" width="9.5" height="2.2" fill="#5ab4f8"/><path d="M6.8 10h2.5M10.5 10h2.5M6.8 12.5h2.5M10.5 12.5h2.5" stroke="#8a8a8a" stroke-width="0.8"/></svg></div>
<div class="tt" style="left:161.5px;top:627.5px">Tables (6)</div>
<div class="hl" style="left:153.0px;top:657.0px"></div>
<div class="bx" style="left:144.0px;top:653.0px"><i class="mh"></i><i class="mv"></i></div>
<div class="ic" style="left:160.5px;top:649.0px"><svg width="16" height="16" viewBox="0 0 16 16"><rect x="1.8" y="0.8" width="13" height="14.5" rx="0.8" fill="#eeeae6" stroke="#1a8ae8" stroke-width="1.2"/><rect x="2.3" y="1.3" width="12" height="2.8" fill="#5ab4f8"/><path d="M4 7.5h3.2M9.5 7.5h3.2M4 10h3.2M9.5 10h3.2M4 12.5h3.2M9.5 12.5h3.2" stroke="#8a8a8a" stroke-width="0.8"/></svg></div>
<div class="tt" style="left:181.5px;top:649.5px">char_test_limited</div>
<div class="hl" style="left:153.0px;top:679.0px"></div>
<div class="bx" style="left:144.0px;top:675.0px"><i class="mh"></i><i class="mv"></i></div>
<div class="ic" style="left:160.5px;top:671.0px"><svg width="16" height="16" viewBox="0 0 16 16"><rect x="1.8" y="0.8" width="13" height="14.5" rx="0.8" fill="#eeeae6" stroke="#1a8ae8" stroke-width="1.2"/><rect x="2.3" y="1.3" width="12" height="2.8" fill="#5ab4f8"/><path d="M4 7.5h3.2M9.5 7.5h3.2M4 10h3.2M9.5 10h3.2M4 12.5h3.2M9.5 12.5h3.2" stroke="#8a8a8a" stroke-width="0.8"/></svg></div>
<div class="tt" style="left:181.5px;top:671.5px">constitution</div>
<div class="hl" style="left:153.0px;top:701.0px"></div>
<div class="bx" style="left:144.0px;top:697.0px"><i class="mh"></i><i class="mv"></i></div>
<div class="selbg" style="left:158.5px;top:691.5px;width:93px;height:21px"></div>
<div class="ic" style="left:160.5px;top:693.0px"><svg width="16" height="16" viewBox="0 0 16 16"><rect x="1.8" y="0.8" width="13" height="14.5" rx="0.8" fill="#eeeae6" stroke="#1a8ae8" stroke-width="1.2"/><rect x="2.3" y="1.3" width="12" height="2.8" fill="#5ab4f8"/><path d="M4 7.5h3.2M9.5 7.5h3.2M4 10h3.2M9.5 10h3.2M4 12.5h3.2M9.5 12.5h3.2" stroke="#8a8a8a" stroke-width="0.8"/></svg></div>
<div class="tt" style="left:181.5px;top:693.5px">grundgesetz</div>
<div class="hl" style="left:153.0px;top:723.0px"></div>
<div class="bx" style="left:144.0px;top:719.0px"><i class="mh"></i><i class="mv"></i></div>
<div class="ic" style="left:160.5px;top:715.0px"><svg width="16" height="16" viewBox="0 0 16 16"><rect x="1.8" y="0.8" width="13" height="14.5" rx="0.8" fill="#eeeae6" stroke="#1a8ae8" stroke-width="1.2"/><rect x="2.3" y="1.3" width="12" height="2.8" fill="#5ab4f8"/><path d="M4 7.5h3.2M9.5 7.5h3.2M4 10h3.2M9.5 10h3.2M4 12.5h3.2M9.5 12.5h3.2" stroke="#8a8a8a" stroke-width="0.8"/></svg></div>
<div class="tt" style="left:181.5px;top:715.5px">text_test</div>
<div class="hl" style="left:153.0px;top:745.0px"></div>
<div class="bx" style="left:144.0px;top:741.0px"><i class="mh"></i><i class="mv"></i></div>
<div class="ic" style="left:160.5px;top:737.0px"><svg width="16" height="16" viewBox="0 0 16 16"><rect x="1.8" y="0.8" width="13" height="14.5" rx="0.8" fill="#eeeae6" stroke="#1a8ae8" stroke-width="1.2"/><rect x="2.3" y="1.3" width="12" height="2.8" fill="#5ab4f8"/><path d="M4 7.5h3.2M9.5 7.5h3.2M4 10h3.2M9.5 10h3.2M4 12.5h3.2M9.5 12.5h3.2" stroke="#8a8a8a" stroke-width="0.8"/></svg></div>
<div class="tt" style="left:181.5px;top:737.5px">varchar_test</div>
<div class="hl" style="left:153.0px;top:767.0px"></div>
<div class="bx" style="left:144.0px;top:763.0px"><i class="mh"></i><i class="mv"></i></div>
<div class="ic" style="left:160.5px;top:759.0px"><svg width="16" height="16" viewBox="0 0 16 16"><rect x="1.8" y="0.8" width="13" height="14.5" rx="0.8" fill="#eeeae6" stroke="#1a8ae8" stroke-width="1.2"/><rect x="2.3" y="1.3" width="12" height="2.8" fill="#5ab4f8"/><path d="M4 7.5h3.2M9.5 7.5h3.2M4 10h3.2M9.5 10h3.2M4 12.5h3.2M9.5 12.5h3.2" stroke="#8a8a8a" stroke-width="0.8"/></svg></div>
<div class="tt" style="left:181.5px;top:759.5px">varchar_test_limited</div>
<div class="hl" style="left:133.0px;top:789.0px"></div>
<div class="bx" style="left:124.0px;top:785.0px"><i class="mh"></i><i class="mv"></i></div>
<div class="ic" style="left:140.5px;top:781.0px"><svg width="16" height="16" viewBox="0 0 16 16"><defs>
<linearGradient id="gy" x1="0" x2="1"><stop offset="0" stop-color="#fffbe8"/><stop offset="0.35" stop-color="#f4eeb8"/><stop offset="1" stop-color="#d9cf70"/></linearGradient>
<linearGradient id="gb" x1="0" x2="0" y1="0" y2="1"><stop offset="0" stop-color="#6cc8ff"/><stop offset="1" stop-color="#0a7ee0"/></linearGradient>
<linearGradient id="gt" x1="0" x2="0" y1="0" y2="1"><stop offset="0" stop-color="#b8f4f4"/><stop offset="1" stop-color="#2ab8b8"/></linearGradient>
<linearGradient id="gg" x1="0" x2="0" y1="0" y2="1"><stop offset="0" stop-color="#dcffc0"/><stop offset="1" stop-color="#8ad84a"/></linearGradient>
</defs><rect x="0.7" y="0.7" width="3" height="10.5" rx="1.3" fill="url(#gt)" stroke="#2a90a0"/><rect x="2.7" y="0.7" width="3" height="12.5" rx="1.3" fill="url(#gt)" stroke="#2a90a0"/><path d="M4.5 1.5l3.5 0 7.3 6.5-7.3 7.3H4.5z" fill="url(#gt)" stroke="#2a90a0"/><path d="M7 5l3 3-3 3" fill="none" stroke="#2a90a0" stroke-width="0.8"/></svg></div>
<div class="tt" style="left:161.5px;top:781.5px">Trigger Functions</div>
<div class="hl" style="left:133.0px;top:811.0px"></div>
<div class="bx" style="left:124.0px;top:807.0px"><i class="mh"></i><i class="mv"></i></div>
<div class="ic" style="left:140.5px;top:803.0px"><svg width="16" height="16" viewBox="0 0 16 16"><path d="M0.8 0.8h7l3 3v7h-7l-3-3z" fill="#a8f0d0" stroke="#40c890" stroke-width="1"/><path d="M2.8 2.8h7l3 3v7h-7l-3-3z" fill="#a8f0d0" stroke="#40c890" stroke-width="1"/><rect x="4.8" y="4.8" width="10.5" height="10.5" fill="#80eab8" stroke="#40c890" stroke-width="1"/></svg></div>
<div class="tt" style="left:161.5px;top:803.5px">Types</div>
<div class="hl" style="left:133.0px;top:833.0px"></div>
<div class="bx" style="left:124.0px;top:829.0px"><i class="mh"></i><i class="mv"></i></div>
<div class="ic" style="left:140.5px;top:825.0px"><svg width="16" height="16" viewBox="0 0 16 16"><rect x="0.8" y="0.8" width="10.5" height="10.5" rx="1" fill="#fff" stroke="#a0d010" stroke-width="1.6"/><rect x="2.8" y="2.8" width="10.5" height="10.5" rx="1" fill="#fff" stroke="#a0d010" stroke-width="1.6"/><rect x="4.8" y="4.8" width="10.5" height="10.5" rx="1" fill="#b8e830" stroke="#a0d010" stroke-width="1.2"/><rect x="6.8" y="6.8" width="6.5" height="6.5" fill="none" stroke="#fff" stroke-width="1.2"/><rect x="8.8" y="8.8" width="2.5" height="2.5" fill="#90c010"/></svg></div>
<div class="tt" style="left:161.5px;top:825.5px">Views</div>
<div class="hl" style="left:73.0px;top:855.0px"></div>
<div class="bx" style="left:64.0px;top:851.0px"><i class="mh"></i><i class="mv"></i></div>
<div class="ic" style="left:80.5px;top:847.0px"><svg width="16" height="16" viewBox="0 0 16 16"><defs>
<linearGradient id="gy" x1="0" x2="1"><stop offset="0" stop-color="#fffbe8"/><stop offset="0.35" stop-color="#f4eeb8"/><stop offset="1" stop-color="#d9cf70"/></linearGradient>
<linearGradient id="gb" x1="0" x2="0" y1="0" y2="1"><stop offset="0" stop-color="#6cc8ff"/><stop offset="1" stop-color="#0a7ee0"/></linearGradient>
<linearGradient id="gt" x1="0" x2="0" y1="0" y2="1"><stop offset="0" stop-color="#b8f4f4"/><stop offset="1" stop-color="#2ab8b8"/></linearGradient>
<linearGradient id="gg" x1="0" x2="0" y1="0" y2="1"><stop offset="0" stop-color="#dcffc0"/><stop offset="1" stop-color="#8ad84a"/></linearGradient>
</defs><path d="M1.5 3.2v9.6c0 1.6 2.9 2.8 6.5 2.8s6.5-1.2 6.5-2.8V3.2" fill="url(#gy)" stroke="#b7a344"/><ellipse cx="8" cy="3.2" rx="6.5" ry="2.6" fill="#fcf9e2" stroke="#b7a344"/></svg></div>
<div class="tt" style="left:101.5px;top:847.5px">postgres</div>
<div class="hl" style="left:53.0px;top:877.0px"></div>
<div class="bx" style="left:44.0px;top:873.0px"><i class="mh"></i><i class="mv"></i></div>
<div class="ic" style="left:60.5px;top:869.0px"><svg width="16" height="16" viewBox="0 0 16 16"><circle cx="4.5" cy="3.2" r="2.3" fill="#f2e4e0" stroke="#888" stroke-width="0.9"/><path d="M1 9c0-2.5 1.5-3.5 3.5-3.5S8 6.5 8 9z" fill="#cce8f4" stroke="#888" stroke-width="0.9"/><circle cx="11.5" cy="5" r="2.3" fill="#f2e4e0" stroke="#888" stroke-width="0.9"/><path d="M8 11c0-2.5 1.5-3.5 3.5-3.5S15 8.5 15 11z" fill="#cce8f4" stroke="#888" stroke-width="0.9"/><circle cx="8" cy="8" r="2.3" fill="#f2e4e0" stroke="#888" stroke-width="0.9"/><path d="M4.5 14.2c0-2.5 1.5-3.5 3.5-3.5s3.5 1 3.5 3.5z" fill="#cce8f4" stroke="#888" stroke-width="0.9"/></svg></div>
<div class="tt" style="left:81.5px;top:869.5px">Login/Group Roles</div>
<div class="hl" style="left:53.0px;top:899.0px"></div>
<div class="bx" style="left:44.0px;top:895.0px"><i class="mh"></i><i class="mv"></i></div>
<div class="ic" style="left:60.5px;top:891.0px"><svg width="16" height="16" viewBox="0 0 16 16"><path d="M0.8 1.2h3.5l1 1h2.5v5.5H0.8z" fill="#f4e860" stroke="#d4b010"/><path d="M3.8 4.2h3.5l1 1h2.5v5.5H3.8z" fill="#f4e860" stroke="#d4b010"/><path d="M6.8 7.5h3.5l1 1h4v6.5H6.8z" fill="#f8f070" stroke="#d4b010"/></svg></div>
<div class="tt" style="left:81.5px;top:891.5px">Tablespaces</div>
</div>
<div id="splitter"></div>
<div id="right">
 <div id="tabstrip"><div class="tab" style="left:0px;width:98px"></div><div class="ti" style="left:7.800000000000011px;top:17.200000000000003px"><svg width="13.5" height="11" viewBox="0 0 13.5 11"><path d="M6.75 0.3A6.5 6.5 0 0 0 0.25 6.8c0 1.6 0.5 3 1.4 4.1h10.2c0.9-1.1 1.4-2.5 1.4-4.1A6.5 6.5 0 0 0 6.75 0.3z" fill="#000"/><rect x="6.2" y="1.6" width="1.1" height="1.1" fill="#ddd"/><rect x="2.9" y="3.1" width="1.1" height="1.1" fill="#ddd"/><rect x="9.6" y="3.1" width="1.1" height="1.1" fill="#ddd"/><rect x="1.6" y="6.2" width="1.1" height="1.1" fill="#ddd"/><rect x="10.9" y="6.2" width="1.1" height="1.1" fill="#ddd"/><path d="M6.1 8.8l1-6" stroke="#ddd" stroke-width="1.1"/></svg></div><div class="tx" style="left:26.399999999999977px">Dashboard</div><div class="tab" style="left:99.5px;width:94px"></div><div class="ti" style="left:107px;top:15.299999999999997px"><svg width="14" height="14" viewBox="0 0 14 14"><g fill="none" stroke="#000"><circle cx="4.5" cy="7" r="3.7" stroke-width="1.7" stroke-dasharray="1.45 1.45"/><circle cx="4.5" cy="7" r="2.4" stroke-width="2"/><circle cx="11" cy="3.2" r="2.4" stroke-width="1.3" stroke-dasharray="1.25 1.25"/><circle cx="11" cy="3.2" r="1.5" stroke-width="1.2"/><circle cx="11" cy="10.7" r="2.4" stroke-width="1.3" stroke-dasharray="1.25 1.25"/><circle cx="11" cy="10.7" r="1.5" stroke-width="1.2"/></g></svg></div><div class="tx" style="left:126.19999999999999px">Properties</div><div class="tab" style="left:195px;width:57px"></div><div class="ti" style="left:202.7px;top:15.5px"><svg width="12" height="13.5" viewBox="0 0 12 13.5"><path d="M0.8 0.8h7.4l3 3v8.9H0.8z" fill="none" stroke="#111" stroke-width="1.3"/><path d="M8 0.8v3.2h3.2" fill="none" stroke="#111" stroke-width="1"/><path d="M3 5.6h5.5M3 7.9h5.5M3 10.1h5.5" stroke="#111" stroke-width="1.1"/></svg></div><div class="tx" style="left:219.3px">SQL</div><div class="tab" style="left:252.5px;width:89.5px"></div><div class="ti" style="left:261px;top:16px"><svg width="15.5" height="12" viewBox="0 0 15.5 12"><path d="M0.7 0v11.3h14.8" fill="none" stroke="#111" stroke-width="1.3"/><path d="M2.3 9l3.3-3.4 2.3 2.3 5-5" fill="none" stroke="#111" stroke-width="1.7"/><path d="M10.5 1.2h4.3v4.3z" fill="#111"/></svg></div><div class="tx" style="left:281.20000000000005px">Statistics</div><div class="tab" style="left:343px;width:115px"></div><div class="ti" style="left:351.5px;top:15.5px"><svg width="12" height="13.5" viewBox="0 0 12 13.5"><path d="M3.8 5.2V1.6Q3.8 0.7 5 0.7T6.2 1.6V4.3L10 5Q11.2 5.3 11 6.5L10.3 11H4.5L1.2 7.3Q0.5 6.3 1.6 5.7T3.8 6.5Z" fill="none" stroke="#111" stroke-width="1.3" stroke-linejoin="round"/><rect x="4.2" y="10.4" width="6.3" height="2.8" fill="#111"/></svg></div><div class="tx" style="left:368.79999999999995px">Dependencies</div><div class="tab" style="left:460px;width:103px"></div><div class="ti" style="left:467.5px;top:15.5px"><svg width="12" height="13.5" viewBox="0 0 12 13.5"><path d="M4.3 2.5H10.3L10.8 7Q10.8 8.6 9.5 8.6H5.8V12Q5.8 13 4.7 13T3.6 12V9.2L1 7.6Q0.4 7.1 1 6.5L4.3 2.5Z" fill="none" stroke="#111" stroke-width="1.3" stroke-linejoin="round"/><rect x="4" y="0.4" width="6.7" height="2.6" fill="#111"/></svg></div><div class="tx" style="left:484.5px">Dependents</div><div class="tab act" style="left:564px;width:78px"></div><div class="ti" style="left:571.3px;top:17px"><svg width="7.5" height="13" viewBox="0 0 10 16"><path d="M3 0h6L5.8 6H9.2L2.2 16l2-7.5H0.8z" fill="#111"/></svg></div><div class="tx act" style="left:587px">Query-1</div><div id="closebtn"><svg width="9" height="9" viewBox="0 0 9 9"><path d="M1.2 1.2l6.6 6.6M7.8 1.2l-6.6 6.6" stroke="#2a2a2a" stroke-width="2.3"/></svg></div></div>
 <div id="toolbar"><div class="bg en" style="left:3px"><div class="bt" style="width:38px"><svg width="16" height="12" viewBox="0 0 16 12"><path d="M0.7 11.2V0.8h4.2l1.3 1.4h6V5" fill="none" stroke="#222" stroke-width="1.3" stroke-linejoin="round"/><path d="M0.8 11.2L3.5 5h11.8l-2.8 6.2z" fill="none" stroke="#222" stroke-width="1.3" stroke-linejoin="round"/></svg></div><div class="bt" style="width:39px"><svg width="13" height="13" viewBox="0 0 13 13"><path d="M0.7 0.7h9.6l2 2v9.6H0.7z" fill="none" stroke="#222" stroke-width="1.3"/><path d="M3.2 0.8v3.8h5.8V0.8" fill="none" stroke="#222" stroke-width="1.1"/><rect x="6.6" y="1.3" width="1.4" height="2.6" fill="#222"/><rect x="3" y="7.3" width="7" height="5" fill="none" stroke="#222" stroke-width="1.1"/></svg></div><div class="bt" style="width:18px"><span style="color:#333;display:flex;margin-top:1.5px"><svg width="8" height="4.5" viewBox="0 0 8 4.5"><path d="M0 0h8L4 4.5z" fill="currentColor"/></svg></span></div></div><div class="bg dis" style="left:105px"><div class="bt" style="width:38.5px"><svg width="15" height="15" viewBox="0 0 15 15"><path d="M1 4.2L3.7 1.2H8.2V10.3H1z" fill="#f2f2f2" stroke="#6a6a6a" stroke-width="1.2" stroke-linejoin="round"/><path d="M5.8 6.7L8.5 3.7H13.8V14H5.8z" fill="#f2f2f2" stroke="#6a6a6a" stroke-width="1.2" stroke-linejoin="round"/><path d="M3.5 1.5v2.8H1M8.3 4v2.8H5.8" fill="none" stroke="#6a6a6a" stroke-width="0.9"/></svg></div><div class="bt" style="width:38.5px"><svg width="14" height="14" viewBox="0 0 14 14"><rect x="0.5" y="0.5" width="9.5" height="12" fill="#6a6a6a"/><rect x="2" y="1.3" width="6.5" height="1.2" fill="#ddd"/><path d="M5.8 5.2H10.2L13.4 8.4V13.4H5.8z" fill="#f4f4f4" stroke="#6a6a6a" stroke-width="1.1"/><path d="M10 5.3v3.3h3.3" fill="none" stroke="#6a6a6a" stroke-width="0.9"/></svg></div></div><div class="bg dis" style="left:188px"><div class="bt" style="width:38px"><svg width="11" height="13" viewBox="0 0 11 13"><path d="M0 2.3h11M3.6 2V0.6h3.8V2" stroke="#6a6a6a" stroke-width="1.2" fill="none"/><path d="M1.6 3.2h7.8l-0.6 9H2.2z" fill="none" stroke="#6a6a6a" stroke-width="1.2"/><path d="M3.9 4.5v6.5M5.5 4.5v6.5M7.1 4.5v6.5" stroke="#6a6a6a" stroke-width="1"/></svg></div></div><div class="bg dis" style="left:232px"><div class="bt" style="width:39px"><svg width="12" height="12" viewBox="0 0 12 12"><path d="M0 0.3h12L7.3 5.6v6.2L4.7 9.6V5.6z" fill="#666"/></svg></div><div class="bt" style="width:18px"><span style="color:#6a6a6a;display:flex;margin-top:1.5px"><svg width="8" height="4.5" viewBox="0 0 8 4.5"><path d="M0 0h8L4 4.5z" fill="currentColor"/></svg></span></div></div><div class="bg en" style="left:388px"><div class="bt" style="width:38px"><svg width="8" height="13" viewBox="0 0 10 16"><path d="M3 0h6L5.8 6H9.2L2.2 16l2-7.5H0.8z" fill="#222"/></svg></div><div class="bt" style="width:19px"><span style="color:#333;display:flex;margin-top:1.5px"><svg width="8" height="4.5" viewBox="0 0 8 4.5"><path d="M0 0h8L4 4.5z" fill="currentColor"/></svg></span></div></div><div class="bg dis" style="left:447px"><div class="bt" style="width:38px"><div style="width:12.5px;height:12.5px;background:#666;margin-left:1px"></div></div></div><div class="bg en" style="left:491px"><div class="bt" style="width:38.5px"><svg width="15" height="13" viewBox="0 0 15 13"><path d="M8.5 1.8H3Q1 1.8 1 3.8V10Q1 12 3 12H9Q11 12 11 10V7.5" fill="none" stroke="#222" stroke-width="1.3"/><path d="M5 9.2l0.7-2.6 6.3-6.3 2 2-6.3 6.3z" fill="#222"/></svg></div><div class="bt" style="width:18.5px"><span style="color:#333;display:flex;margin-top:1.5px"><svg width="8" height="4.5" viewBox="0 0 8 4.5"><path d="M0 0h8L4 4.5z" fill="currentColor"/></svg></span></div></div><div class="bg en" style="left:554px"><div class="bt" style="width:38px"><span style="display:flex;margin-top:-2px"><svg width="13.5" height="13" viewBox="0 0 13.5 13"><path d="M5.3 0h3v4.8h2.5L6.8 8.8 2.8 4.8h2.5z" fill="#222"/><path d="M0 8.2h3.5l2.5 2.3h1.5l2.5-2.3h3.5V12.8H0z" fill="#222"/></svg></span></div><div class="bt" style="width:19px"><span style="color:#333;display:flex;margin-top:1.5px"><svg width="8" height="4.5" viewBox="0 0 8 4.5"><path d="M0 0h8L4 4.5z" fill="currentColor"/></svg></span></div></div><div id="sel">No limit<div class="arr"><span style="color:#aaa;display:flex"><svg width="8" height="4.5" viewBox="0 0 8 4.5"><path d="M0 0h8L4 4.5z" fill="currentColor"/></svg></span></div></div></div>
 <div id="bluebar"><div class="t">datatypes on Shirley@pg</div></div>
 <div id="editor"><div id="gutter"></div></div>
 <div id="hsplit"></div>
 <div id="otabs">
  <div class="otab act" style="left:0;width:86.5px;padding-left:8.5px">Data Output</div>
  <div class="otab" style="left:87.5px;width:58.5px;padding-left:9px">Explain</div>
  <div class="otab" style="left:147.5px;width:73.5px;padding-left:8px">Messages</div>
 </div>
</div>
<div class="abs" style="left:1439px;top:430px;width:1px;height:41px;background:#e2e2e2;border-top:3px solid #f0f0f0"></div><div class="abs" style="left:1439px;top:433px;width:1px;height:1px;background:#777"></div><div class="abs" style="left:1439px;top:469px;width:1px;height:1px;background:#777"></div>
<div class="abs" style="left:285px;top:185px;width:1px;height:670px;background:#c8c8c8"></div><div class="abs" style="left:285px;top:894px;width:1px;height:130px;background:#b0b0b0"></div>
<div id="code" class="abs" style="left:0;top:0">
<div class="ln" style="top:192px">1</div>
<div class="cl" style="top:192px"><span class="k">SELECT</span> cntrycode,</div>
<div class="ln" style="top:212px">2</div>
<div class="cl" style="top:212px"><span class="k">COUNT</span>(<span class="k">*</span>) <span class="k">AS</span> numcust,<span class="k">SUM</span>(c_acctbal) <span class="k">AS</span> totacctbal</div>
<div class="ln" style="top:232px">3</div>
<div class="cl" style="top:232px"><span class="k">FROM</span>(<span class="k">SELECT</span> <span class="k">SUBSTRING</span>(c_phone <span class="k">FROM</span> <span class="n">1</span> for <span class="n">2</span>) <span class="k">AS</span> cntrycode, c_acctbal</div>
<div class="ln" style="top:252px">4</div>
<div class="cl" style="top:252px"><span class="k">FROM</span> tpch.<span class="b">customer</span></div>
<div class="ln" style="top:272px">5</div>
<div class="cl" style="top:272px"><span class="k">WHERE</span> <span class="k">SUBSTRING</span>(c_phone <span class="k">from</span> <span class="n">1</span> for <span class="n">2</span>) <span class="k">IN</span> (<span class="s">’13’</span>, <span class="s">’31’</span>, <span class="s">’23’</span>, <span class="s">’29’</span>, <span class="s">’30’</span>, <span class="s">’18’</span>, <span class="s">’17’</span>)</div>
<div class="ln" style="top:292px">6</div>
<div class="cl" style="top:292px"><span class="k">AND</span> c_acctbal <span class="k">&gt;</span> (<span class="k">SELECT</span> <span class="k">AVG</span>(c_acctbal)<span class="k">FROM</span> tpch.<span class="b">customer</span> <span class="k">WHERE</span> c_acctbal &gt; <span class="k">0.00</span></div>
<div class="ln" style="top:312px">7</div>
<div class="cl" style="top:312px"><span class="k">AND</span> <span class="k">SUBSTRING</span>(c_phone <span class="k">from</span> <span class="n">1</span> for <span class="n">2</span>) <span class="k">IN</span> (<span class="s">’13’</span>, <span class="s">’31’</span>, <span class="s">’23’</span>, <span class="s">’29’</span>, <span class="s">’30’</span>, <span class="s">’18’</span>, <span class="s">’17’</span>))</div>
<div class="ln" style="top:332px">8</div>
<div class="cl" style="top:332px"><span class="k">AND</span> not exists</div>
<div class="ln" style="top:352px">9</div>
<div class="cl" style="top:352px">(<span class="k">SELECT</span> <span class="k">*</span> <span class="k">FROM</span> tpch.<span class="b">orders</span></div>
<div class="ln" style="top:372px">10</div>
<div class="cl" style="top:372px"><span class="k">WHERE</span> o_custkey = c_custkey))</div>
<div class="ln" style="top:392px">11</div>
<div class="cl" style="top:392px"><span class="k">AS</span> custsale</div>
<div class="ln" style="top:412px">12</div>
<div class="cl" style="top:412px"><span class="k">GROUP</span> <span class="k">BY</span></div>
<div class="ln" style="top:432px">13</div>
<div class="cl" style="top:432px">cntrycode</div>
<div class="ln" style="top:452px">14</div>
<div class="cl" style="top:452px"><span class="k">ORDER</span> <span class="k">BY</span></div>
<div class="ln" style="top:472px">15</div>
<div class="cl" style="top:472px">cntrycode;</div>
</div>
</body></html>
